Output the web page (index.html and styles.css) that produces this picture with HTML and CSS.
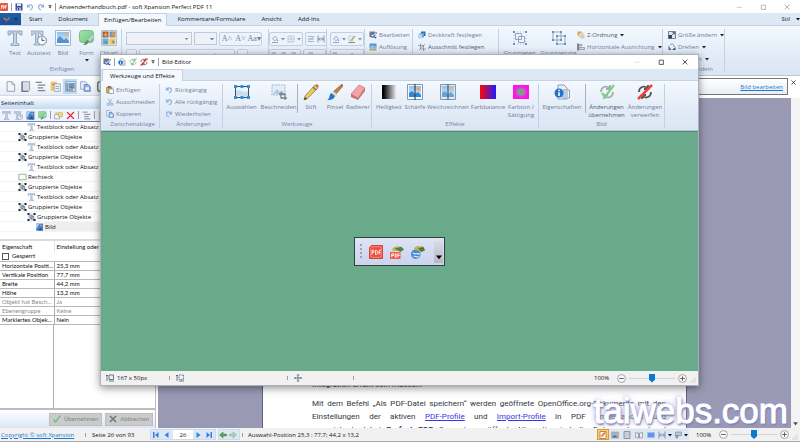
FILE: index.html
```html
<!DOCTYPE html>
<html lang="de">
<head>
<meta charset="utf-8">
<title>Anwenderhandbuch.pdf - soft Xpansion Perfect PDF 11</title>
<link rel="stylesheet" href="styles.css">
</head>
<body>
<svg class="defs" aria-hidden="true">
  <defs>
    <linearGradient id="g-sky" x1="0" y1="0" x2="0" y2="1"><stop offset="0" stop-color="#8fc0ee"/><stop offset="1" stop-color="#dcecfa"/></linearGradient>
    <linearGradient id="g-green" x1="0" y1="0" x2="1" y2="1"><stop offset="0" stop-color="#a4e2ae"/><stop offset="1" stop-color="#6cc483"/></linearGradient>
    <linearGradient id="g-dark" x1="0" y1="0" x2="1" y2="0"><stop offset=".1" stop-color="#000"/><stop offset="1" stop-color="#e8eaee"/></linearGradient>
    <linearGradient id="g-rb" x1="0" y1="0" x2="1" y2="0"><stop offset="0" stop-color="#ff0808"/><stop offset="1" stop-color="#1c1cff"/></linearGradient>
    <radialGradient id="g-hue"><stop offset="0" stop-color="#3fc94c"/><stop offset=".35" stop-color="#8a96a0"/><stop offset=".8" stop-color="#ff14e8"/></radialGradient>
  </defs>
  <symbol id="i-app" viewBox="0 0 16 16"><rect x="0" y="0" width="16" height="16" rx="2" fill="#e8553f"/><path d="M3 5v7M3 5h2v3H3M7 5v6h1l1-2V7L8 5zM11 11V5h3M11 8h2" fill="none" stroke="#fff" stroke-width="1.5"/></symbol>
  <symbol id="i-save" viewBox="0 0 16 16"><path d="M1 1h13l1 1v13H1z" fill="#4450a8"/><path d="M4 1h8v5H4z" fill="#dfe4f6"/><path d="M4 9h8v6H4z" fill="#aab4dc"/><path d="M6 10h2v4H6z" fill="#303c88"/></symbol>
  <symbol id="i-undo" viewBox="0 0 16 16"><path d="M3 3v5h5M4 7c3-5 9-4 9 1 0 3-2 5-5 6" fill="none" stroke="#8fadE0" stroke-width="2.4"/></symbol>
  <symbol id="i-redo" viewBox="0 0 16 16"><path d="M13 3v5H8M12 7C9 2 3 3 3 8c0 3 2 5 5 6" fill="none" stroke="#8fadE0" stroke-width="2.4"/></symbol>
  <symbol id="i-down" viewBox="0 0 8 8"><path d="M0 2h8L4 7z" fill="currentColor"/></symbol>
  <symbol id="i-more" viewBox="0 0 8 8"><path d="M1 0h6v1.500H1zM1 3h6L4 7z" fill="currentColor"/></symbol>
  <symbol id="i-bird" viewBox="0 0 16 16"><path d="M0 5l5 1 3 3 5-6-1 6-4 2-1 4-2-5-3-1z" fill="#c86f35"/><path d="M8 9l7-7-3 8z" fill="#4a8fc8"/></symbol>
  <symbol id="i-text" viewBox="0 0 16 16"><path d="M1 1h14v4h-2L12 3H9.500v10l2.500 1v1.500H4V14l2.500-1V3H4L3 5H1z" fill="#c4d2e5" stroke="#8198b8" stroke-width=".8"/></symbol>
  <symbol id="i-autotext" viewBox="0 0 16 16"><path d="M0 1h12v4h-2L9 3H7.500v10L9 14v1H3v-1l1.500-1V3H3L2 5H0z" fill="#c4d2e5" stroke="#8198b8" stroke-width=".7"/><circle cx="11" cy="10.500" r="4.500" fill="#f3f6fa" stroke="#7b8898"/><path d="M11 7.500v3h2.500" fill="none" stroke="#59687c"/></symbol>
  <symbol id="i-picture" viewBox="0 0 16 16"><path d="M.5.5h15v15H.5z" fill="#f1f7fc" stroke="#9db7d5"/><path d="M2 2h12v11H2z" fill="url(#g-sky)"/><path d="M2 13V9l3-3 4 4 2-2 3 3v2z" fill="#5293d0"/><circle cx="11.500" cy="5" r="1.500" fill="#ffb05f"/></symbol>
  <symbol id="i-form" viewBox="0 0 16 16"><rect x=".5" y=".5" width="14" height="12" rx="3" fill="url(#g-green)" stroke="#79bb87"/><path d="M16 6l-6 6-2-1 6-6z" fill="#c6cdd8"/><path d="M10 11c-1 4-4 4-6 4 2-1 2-4 5-5z" fill="#5d8c5f"/></symbol>
  <symbol id="i-clip" viewBox="0 0 16 16"><path d="M.5.5h15v15H.5z" fill="#eef1f5" stroke="#b4bfcf"/><path d="M1.500 1.500h6v6h-6z" fill="#8a5f4c"/><path d="M8.500 1.500h6v6h-6z" fill="#7c93ad"/><path d="M1.500 8.500h6v6h-6z" fill="#6cabdf"/><path d="M8.500 8.500h6v6h-6z" fill="#f1c758"/><path d="M2 5l3-3 2 3-2 2zM10 5l2-3 2 2v3z" fill="#e8963c"/><path d="M2 12l3-1 2 2-2 1z" fill="#69a65b"/><path d="M11 10l3 2-2 2z" fill="#5d8bc9"/></symbol>
  <symbol id="i-fill" viewBox="0 0 16 16"><path d="M3 8l5-6 5 5-5 5z" fill="#e3e9f2" stroke="#8796b2" stroke-width="1.300"/><path d="M12 8l3 4h-3z" fill="#6d92d0"/><path d="M2 14h12v2H2z" fill="#9aa2b3"/></symbol>
  <symbol id="i-grid" viewBox="0 0 16 16"><path d="M2 2h12v12H2zM8 2v12M2 8h12" fill="none" stroke="#aab6ca" stroke-width="1.300"/></symbol>
  <symbol id="i-space" viewBox="0 0 16 16"><path d="M2 3h12M2 13h12M3 11l4-3M13 5L8 8M1 8h13" fill="none" stroke="#8ca0c0" stroke-width="1.500"/></symbol>
  <symbol id="i-pen" viewBox="0 0 16 16"><path d="M2 2h8v10H2z" fill="#eef2f8" stroke="#a0acc0"/><path d="M14 1L6 9l-1 3 3-1 7-8z" fill="#c3a35d"/><path d="M1 14h13v2H1z" fill="#85868e"/></symbol>
  <symbol id="i-edit" viewBox="0 0 16 16"><rect x="1" y="1" width="11" height="11" fill="#bf6f44"/><circle cx="7" cy="8" r="5.500" fill="#3f7cc8"/><path d="M3 8l4 4 9-8-2-2-7 6-2-2z" fill="#e9eef8" stroke="#2b4e9b"/><path d="M9 13l6-2-1 4z" fill="#34539f"/></symbol>
  <symbol id="i-res" viewBox="0 0 16 16"><path d="M1 1h14v10H1z" fill="#5d97d3"/><path d="M2 9l4-4 3 3 3-2 2 3z" fill="#c4dcf1"/><path d="M1 12h14v3H1z" fill="#cba456"/></symbol>
  <symbol id="i-opac" viewBox="0 0 16 16"><path d="M6 1h9v9H6z" fill="#2f70ad"/><path d="M3 4h9v9H3z" fill="#6aa8d8"/><path d="M0 7h8v8H0z" fill="#bcd8ed"/></symbol>
  <symbol id="i-crop" viewBox="0 0 16 16"><path d="M5 1v11h11M0 5h11v11M2 14L14 2" fill="none" stroke="#707988" stroke-width="1.300"/></symbol>
  <symbol id="i-group" viewBox="0 0 16 16"><path d="M2 2h8v8H2zM6 6h8v8H6z" fill="none" stroke="#91a8c8"/><path d="M1 1h2v2H1zM9 1h2v2H9zM1 9h2v2H1zM5 5h2v2H5zM13 5h2v2h-2zM5 13h2v2H5zM13 13h2v2h-2zM9 9h2v2H9z" fill="#718eb4"/></symbol>
  <symbol id="i-groupout" viewBox="0 0 16 16"><path d="M3.500 3.500h6v6h-6zM6.500 6.500h6v6h-6z" fill="none" stroke="#8fa4c2"/><path d="M1 1h2v2H1zM13 1h2v2h-2zM1 13h2v2H1zM13 13h2v2h-2z" fill="#718eb4"/><path d="M5 2h1M8 2h1M11 2h1M5 14h1M8 14h1M11 14h1M2 5v1M2 8v1M2 11v1M14 5v1M14 8v1M14 11v1" stroke="#a8bad2"/></symbol>
  <symbol id="i-groupd" viewBox="0 0 16 16"><path d="M1.500 1.500h13v13h-13z" fill="none" stroke="#8a96aa" stroke-dasharray="2 1"/><path d="M4.500 4.500h5v6h-5zM7 6.500h5v6H7z" fill="#eef2f8" stroke="#44546f" stroke-width="1.200"/><path d="M0 0h4v4H0zM12 0h4v4h-4zM0 12h4v4H0zM12 12h4v4h-4z" fill="#1b263a"/></symbol>
  <symbol id="i-order" viewBox="0 0 16 16"><path d="M1 1h8v8H1z" fill="#d6a64d"/><path d="M4 4h8v8H4z" fill="#f5e0ae" stroke="#c8a666"/><path d="M8 8h7v7H8z" fill="#c8ced8"/></symbol>
  <symbol id="i-align" viewBox="0 0 16 16"><path d="M2 1v14" stroke="#222" stroke-width="2"/><path d="M4 3h6v3H4zM4 9h11v4H4z" fill="#cfdcec" stroke="#5d6e88"/></symbol>
  <symbol id="i-size" viewBox="0 0 16 16"><path d="M1 1h14v14H1z" fill="#dde7f2" stroke="#52647c" stroke-width="1.500"/><path d="M1 8h7v7H1z" fill="#33485f"/><path d="M8 8l5-5M9 3h4v4" fill="none" stroke="#33485f" stroke-width="1.500"/></symbol>
  <symbol id="i-rotate" viewBox="0 0 16 16"><path d="M1 14V5l6 9z" fill="#6e56a0"/><path d="M8 14h7V8z" fill="#38518a"/><path d="M4 4c4-4 9-1 8 4" fill="none" stroke="#5575a8" stroke-width="1.500"/></symbol>
  <symbol id="i-page" viewBox="0 0 16 16"><path d="M3 1h7l4 4v10H3z" fill="#f4f6f9" stroke="#8492a6" stroke-width="1.200"/><path d="M10 1v4h4" fill="none" stroke="#8492a6"/></symbol>
  <symbol id="i-book" viewBox="0 0 16 16"><path d="M3 1h11v12l-2 2H3z" fill="#d7dee8" stroke="#8492a6" stroke-width="1.200"/><path d="M3 1v14h9" stroke="#66758a" stroke-width="1.800" fill="none"/></symbol>
  <symbol id="i-open" viewBox="0 0 16 16"><path d="M1 3l6 1v10l-6-1zM15 3L9 4v10l6-1z" fill="#e8ecf1" stroke="#7d8793" stroke-width="1.300"/><path d="M8 4v10" stroke="#7d8793"/></symbol>
  <symbol id="i-list" viewBox="0 0 16 16"><path d="M1 2h9M4 6h11M4 10h8M4 14h11" stroke="#7a8798" stroke-width="1.700"/></symbol>
  <symbol id="i-tpl" viewBox="0 0 16 16"><path d="M1 1h9v13H1z" fill="#f5c468"/><path d="M6 4h9v11H6z" fill="#edf1f6" stroke="#8492a6"/><path d="M8 8h5M8 11h5M3 5h4" stroke="#6c85a8"/></symbol>
  <symbol id="i-layer" viewBox="0 0 16 16"><path d="M1 1h14v14H1z" fill="#eef5fc" stroke="#70859e"/><path d="M5 3h9v8H5z" fill="#5f9bd0"/><path d="M6 11l3-4 5 4z" fill="#b16a45"/><path d="M3 3v10h9" fill="none" stroke="#445a78" stroke-width="1.500"/></symbol>
  <symbol id="i-copy" viewBox="0 0 16 16"><path d="M1 1h7l2 2v9H1z" fill="#eaf1f9" stroke="#6d8dba"/><path d="M6 5h6l3 3v7H6z" fill="#8eb2df" stroke="#4877b6"/><path d="M8 9h5v4H8z" fill="#e9f2fb"/></symbol>
  <symbol id="i-attach" viewBox="0 0 16 16"><path d="M11 4v8c0 4-7 4-7 0V4c0-4 5-3 5 0v8" fill="none" stroke="#59606c" stroke-width="1.800"/></symbol>
  <symbol id="i-del" viewBox="0 0 16 16"><path d="M2 2l12 12M14 2L2 14" stroke="#e3232a" stroke-width="2.500"/></symbol>
  <symbol id="i-rect" viewBox="0 0 16 16"><path d="M.8 2.500h14.400v11H.8z" fill="#fff" stroke="#66a56e" stroke-width="1.500"/></symbol>
  <symbol id="i-bild" viewBox="0 0 16 16"><path d="M1 1h14v14H1z" fill="#4085d0"/><path d="M1 1h7L3 10 1 12z" fill="#a9cff3"/><path d="M4 15l6-6 5 6z" fill="#23539a"/><circle cx="11" cy="5" r="2" fill="#f09a55"/></symbol>
  <symbol id="i-new" viewBox="0 0 16 16"><path d="M1 6h9v8H1z" fill="#edf3fb" stroke="#5c7fb0"/><path d="M8 3h7v7H8z" fill="#f7dc87" stroke="#bf9742"/><path d="M4 1v5M2 3h5" stroke="#e5a339"/></symbol>
  <symbol id="i-check" viewBox="0 0 16 16"><path d="M1 9l4 5L15 1" fill="none" stroke="#75b77c" stroke-width="2.500"/></symbol>
  <symbol id="i-x" viewBox="0 0 16 16"><path d="M2 2l12 12M14 2L2 14" stroke="#777b80" stroke-width="3.500"/></symbol>
  <symbol id="i-min" viewBox="0 0 10 10"><path d="M1 5.500h9" stroke="currentColor"/></symbol>
  <symbol id="i-max" viewBox="0 0 10 10"><path d="M2 2h7v7H2z" fill="none" stroke="currentColor" stroke-width="1.300"/></symbol>
  <symbol id="i-close" viewBox="0 0 10 10"><path d="M1 1l8 8M9 1L1 9" stroke="currentColor" stroke-width="1.400"/></symbol>
  <symbol id="i-info" viewBox="0 0 16 16"><path d="M4 1h6l3 3v11H4z" fill="#e9f0f8" stroke="#8c9eb6"/><path d="M9 6h6.500v8H9z" fill="#f4f7fb" stroke="#8ca0bc"/><path d="M10 8h4M10 10h4M10 12h4" stroke="#8ca0bc"/><circle cx="5" cy="9" r="4.500" fill="#1e73cc"/><path d="M5 5.800v1.500M5 8.200V12" stroke="#fff" stroke-width="1.600"/></symbol>
  <symbol id="i-accept" viewBox="0 0 16 16"><path d="M2 8c0-5 5-7 9-4M11 1v4H7M14 8c0 5-5 7-9 4M5 15v-4h4" fill="none" stroke="#9fb0ac" stroke-width="1.800"/><path d="M3 9l3 4 9-12" fill="none" stroke="#86cf8e" stroke-width="2.300"/></symbol>
  <symbol id="i-reject" viewBox="0 0 16 16"><path d="M2 8c0-5 5-7 9-4M11 1v4H7M14 8c0 5-5 7-9 4M5 15v-4h4" fill="none" stroke="#555" stroke-width="1.800"/><path d="M1 15L15 1" stroke="#ee4438" stroke-width="2.500"/></symbol>
  <symbol id="i-paste" viewBox="0 0 16 16"><path d="M1 2h11v12H1z" fill="#e4a63c" stroke="#8a6d34"/><path d="M4 0h5v4H4z" fill="#626e80"/><path d="M6 6h9v9H6z" fill="#f4f7fb" stroke="#506d98"/></symbol>
  <symbol id="i-cut" viewBox="0 0 16 16"><path d="M4 1l5 9M12 1l-5 9" stroke="#8da2bd" stroke-width="1.500"/><circle cx="4.500" cy="12.500" r="2.300" fill="none" stroke="#7395c4" stroke-width="1.500"/><circle cx="11.500" cy="12.500" r="2.300" fill="none" stroke="#7395c4" stroke-width="1.500"/></symbol>
  <symbol id="i-select" viewBox="0 0 16 16"><path d="M1.500 2.500h13v11h-13z" fill="#edf4fb" stroke="#454e5c"/><path d="M2 7c4-3 8 3 12 0v5c-4 2-8-2-12 0z" fill="#c6def2"/><path d="M0 1h3v3H0zM6.500 1h3v3h-3zM13 1h3v3h-3zM0 12h3v3H0zM6.500 12h3v3h-3zM13 12h3v3h-3z" fill="#2e91dc"/></symbol>
  <symbol id="i-trim" viewBox="0 0 16 16"><path d="M1 1h13v10H1z" fill="#e4edf5" stroke="#a2b4c7" stroke-dasharray="2 1"/><path d="M2 10l4-5 3 3 2-2 2 4z" fill="#abcbe5"/><path d="M10 8v6h6M8 10h6v6" fill="none" stroke="#777f88" stroke-width="1.300"/></symbol>
  <symbol id="i-pencil" viewBox="0 0 16 16"><path d="M12 1l3 3L5 14l-4 2 1-4z" fill="#edcb5b" stroke="#86723d" stroke-width=".7"/><path d="M12 1l3 3 1-2-2-2z" fill="#e06b5e"/><path d="M10 3l3 3" stroke="#68905c" stroke-width="1.500"/><path d="M1 16l1-3 2 2z" fill="#36352e"/></symbol>
  <symbol id="i-brush" viewBox="0 0 16 16"><path d="M15 0l1 2-7 8-3-2z" fill="#bd7e3e" stroke="#81552e" stroke-width=".6"/><path d="M6 7l4 3-1 3-5-3z" fill="#d5d9df"/><path d="M4 9l4 3c-1 4-5 4-8 4 3-1 2-5 4-7z" fill="#2878c9"/></symbol>
  <symbol id="i-eraser" viewBox="0 0 16 16"><path d="M9 1l6 3-7 10-7-4z" fill="#f3a5a5" stroke="#c47073" stroke-width=".7"/><path d="M1 10l7 4v2l-7-3zM15 4v3L8 16v-2z" fill="#c76f71"/></symbol>
  <symbol id="i-bright" viewBox="0 0 16 16"><path d="M1 1h14v14H1z" fill="url(#g-dark)"/></symbol>
  <symbol id="i-sharp" viewBox="0 0 16 16"><path d="M.5.5h15v15H.5z" fill="#fafcfe" stroke="#8297b0"/><path d="M2 2h12v11H2z" fill="url(#g-sky)"/><path d="M2 13V9l3-2 3 3 3-2 3 3v2z" fill="#2e87d4"/><circle cx="11.500" cy="5" r="1.800" fill="#f2a74f"/><path d="M8 0v16" stroke="#384352" stroke-width="1.200"/></symbol>
  <symbol id="i-soft" viewBox="0 0 16 16"><path d="M.5.5h15v15H.5z" fill="#dfe8f2" stroke="#8297b0"/><path d="M2 2h12v11H2z" fill="url(#g-sky)"/><path d="M2 13V9l3-2 3 3 3-2 3 3v2z" fill="#69a4d8"/><circle cx="11.500" cy="5" r="1.800" fill="#e0b98b"/><path d="M8 0v16" stroke="#4d5a6c" stroke-width="1.200"/></symbol>
  <symbol id="i-rb" viewBox="0 0 16 16"><path d="M0 1h16v14H0z" fill="url(#g-rb)"/></symbol>
  <symbol id="i-hue" viewBox="0 0 16 16"><path d="M0 1h16v14H0z" fill="url(#g-hue)"/></symbol>
  <symbol id="i-dim" viewBox="0 0 16 16"><path d="M6 2h9v9H6zM2 2v12M0 4l2-2 2 2M6 14h10" fill="none" stroke="#40506a" stroke-width="1.500"/></symbol>
  <symbol id="i-dimsel" viewBox="0 0 16 16"><path d="M6 2h9v9H6z" fill="none" stroke="#40506a" stroke-width="1.500" stroke-dasharray="2 1"/><path d="M2 2v12M0 4l2-2 2 2M6 14h10" fill="none" stroke="#40506a" stroke-width="1.500"/></symbol>
  <symbol id="i-move" viewBox="0 0 16 16"><path d="M8 1v14M1 8h14M6 3l2-2 2 2M6 13l2 2 2-2M3 6L1 8l2 2M13 6l2 2-2 2" fill="none" stroke="#3b4a61" stroke-width="1.400"/></symbol>
  <symbol id="i-minus" viewBox="0 0 16 16"><circle cx="8" cy="8" r="7" fill="#f8f8f8" stroke="#8a8a8a" stroke-width="1.300"/><path d="M4 8h8" stroke="#555" stroke-width="1.600"/></symbol>
  <symbol id="i-plus" viewBox="0 0 16 16"><circle cx="8" cy="8" r="7" fill="#f8f8f8" stroke="#8a8a8a" stroke-width="1.300"/><path d="M4 8h8M8 4v8" stroke="#555" stroke-width="1.600"/></symbol>
  <symbol id="i-grip" viewBox="0 0 12 12"><path d="M9 1h2v2H9zM9 5h2v2H9zM9 9h2v2H9zM5 5h2v2H5zM5 9h2v2H5zM1 9h2v2H1z" fill="#b8b8b8"/></symbol>
  <symbol id="i-first" viewBox="0 0 16 16"><path d="M2 2h3v12H2zM13 2v12L6 8z" fill="#3c7ce0"/></symbol>
  <symbol id="i-prev" viewBox="0 0 16 16"><path d="M11 2v12L3 8z" fill="#3c7ce0"/></symbol>
  <symbol id="i-next" viewBox="0 0 16 16"><path d="M5 2v12l8-6z" fill="#3c7ce0"/></symbol>
  <symbol id="i-last" viewBox="0 0 16 16"><path d="M11 2h3v12h-3zM3 2v12l7-6z" fill="#3c7ce0"/></symbol>
  <symbol id="i-back" viewBox="0 0 16 16"><path d="M8 2v4h7v4H8v4L1 8z" fill="#5fa159" stroke="#3e7d3b"/></symbol>
  <symbol id="i-fwd" viewBox="0 0 16 16"><path d="M8 2v4H1v4h7v4l7-6z" fill="#b0ceae" stroke="#8bad88"/></symbol>
  <symbol id="i-mode" viewBox="0 0 16 16"><path d="M2 1h12v14H2z" fill="#fff8ea" stroke="#a96d3e" stroke-width="1.500"/><path d="M5 11l7-8" stroke="#d2622b" stroke-width="2.500"/></symbol>
  <symbol id="i-view" viewBox="0 0 16 16"><path d="M1 2h14v12H1z" fill="#8fb5e4" stroke="#d59d4e" stroke-width="1.400"/><path d="M2 13l5-5 7 5z" fill="#4273b5"/><circle cx="11" cy="5" r="1.800" fill="#f6a54c"/></symbol>
  <symbol id="i-sheet" viewBox="0 0 16 16"><path d="M2 1h12v14H2z" fill="#c9ccd1" stroke="#7d8189" stroke-width="1.500"/></symbol>
  <symbol id="i-full" viewBox="0 0 16 16"><rect x="1" y="3" width="14" height="10" rx="1" fill="#6493ec" stroke="#a2baf0" stroke-width="2"/></symbol>
  <symbol id="i-fit" viewBox="0 0 16 16"><path d="M2 1v14M14 1v14M3 8h10M6 5L3 8l3 3M10 5l3 3-3 3" fill="none" stroke="#6681a6" stroke-width="1.600"/></symbol>
  <symbol id="i-scan" viewBox="0 0 16 16"><path d="M3 2h12v7H3z" fill="#bcc7d6" stroke="#627087"/><path d="M1 8h9l-3 7H5z" fill="#7d92ad"/></symbol>
  <symbol id="i-pdf" viewBox="0 0 16 16"><path d="M3 .5h12.500v15H.5V3z" fill="#ef4a3b" stroke="#c8362c"/><path d="M3 2h11v12H2V4z" fill="none" stroke="#f9938a"/><path d="M3.500 11V6h2v2.500h-2M7.500 6v5h1l1-1V7l-1-1zM11.500 11V6h2M11.500 8.500H13" fill="none" stroke="#fff"/></symbol>
  <symbol id="i-pdfsend" viewBox="0 0 16 16"><path d="M2 6c2-5 6-5 11-4v4L5 7z" fill="#c6b65a"/><path d="M5 4l8-2 3 3-4 3z" fill="#5d7f48"/><path d="M0 8h12v8H0z" fill="#f15a4d"/><path d="M2 14v-4h2v2H2M6 10v4h1v-4zM9 14v-4h2M9 12h2" fill="none" stroke="#fff"/></symbol>
  <symbol id="i-websend" viewBox="0 0 16 16"><circle cx="5.500" cy="10.500" r="5.500" fill="#4789d0"/><path d="M2 9c3 3 6-1 8 2M3 13c3-1 4 2 6 0" fill="none" stroke="#e2f0ff" stroke-width="1.300"/><path d="M3 5c2-5 6-4 11-3l2 4-5 2-4-2z" fill="#c1b14f"/><path d="M8 4l6-2 2 4-4 2z" fill="#55763f"/></symbol>
</svg>

<div class="app">
  <header class="titlebar">
    <svg class="ic"><use href="#i-app"/></svg><i class="bar"></i>
    <svg class="ic"><use href="#i-save"/></svg><svg class="ic"><use href="#i-undo"/></svg><svg class="ic"><use href="#i-redo"/></svg>
    <svg class="arrow"><use href="#i-more"/></svg><i class="bar"></i>
    <h1>Anwenderhandbuch.pdf - soft Xpansion Perfect PDF 11</h1>
    <div class="winbtns muted">
      <button aria-label="Minimieren"><svg><use href="#i-min"/></svg></button><button aria-label="Maximieren"><svg><use href="#i-max"/></svg></button><button aria-label="Schließen"><svg><use href="#i-close"/></svg></button>
    </div>
  </header>
  <nav class="tabs">
    <button class="appmenu" aria-label="Menü"><svg class="ic"><use href="#i-bird"/></svg><svg class="arrow"><use href="#i-down"/></svg></button>
    <button>Start</button><button>Dokument</button><button class="active">Einfügen/Bearbeiten</button><button>Kommentare/Formulare</button><button>Ansicht</button><button>Add-Ins</button>
    <button class="style">Stil <svg class="arrow"><use href="#i-down"/></svg></button>
  </nav>
  <section class="ribbon main-ribbon">
    <div class="group g-insert">
      <div class="tools">
        <button class="big"><svg><use href="#i-text"/></svg>Text</button>
        <button class="big"><svg><use href="#i-autotext"/></svg>Autotext</button>
        <button class="big"><svg><use href="#i-picture"/></svg>Bild</button>
        <button class="big"><svg><use href="#i-form"/></svg>Form<svg class="arrow"><use href="#i-down"/></svg></button>
        <button class="big"><svg><use href="#i-clip"/></svg>Clipart</button>
      </div>
      <h2>Einfügen</h2>
    </div>
    <div class="group g-font">
      <div class="row"><select class="wide" aria-label="Schriftart"></select><select class="small" aria-label="Schriftgröße"></select>
        <div class="set serif"><button>A˄</button><button>A˅</button><button>Aa▾</button></div></div>
      <div class="row"><div class="set"><button>ab</button></div><div class="set fmt"><button><b>B</b></button><button><em>I</em></button><button><u>U</u></button><button><s>abc</s></button><button>x₂</button><button>x²</button><button>ab▾</button></div><div class="set"><button>A▾</button></div></div>
    </div>
    <div class="group g-para">
      <div class="row"><div class="set"><button aria-label="Füllung"><svg class="ic"><use href="#i-fill"/></svg><svg class="arrow"><use href="#i-down"/></svg></button><button aria-label="Rahmen"><svg class="ic"><use href="#i-grid"/></svg><svg class="arrow"><use href="#i-down"/></svg></button></div><div class="set"><button aria-label="Abstand"><svg class="ic"><use href="#i-space"/></svg></button><button aria-label="Breite"><svg class="ic"><use href="#i-fit"/></svg></button></div></div>
      <div class="row"><div class="set"><button aria-label="Links"><svg class="ic"><use href="#i-list"/></svg></button><button aria-label="Mitte"><svg class="ic"><use href="#i-list"/></svg></button><button aria-label="Rechts"><svg class="ic"><use href="#i-list"/></svg></button></div><div class="set"><button aria-label="Zeilen"><svg class="ic"><use href="#i-list"/></svg><svg class="arrow"><use href="#i-down"/></svg></button></div></div>
    </div>
    <div class="group g-line">
      <div class="row"><div class="set"><button aria-label="Füllfarbe"><svg class="ic"><use href="#i-fill"/></svg><svg class="arrow"><use href="#i-down"/></svg></button><button aria-label="Linienfarbe"><svg class="ic"><use href="#i-pen"/></svg><svg class="arrow"><use href="#i-down"/></svg></button></div></div>
      <div class="row"><div class="set"><button aria-label="Stärke"><svg class="ic"><use href="#i-list"/></svg><svg class="arrow"><use href="#i-down"/></svg></button><button aria-label="Enden"><svg class="ic"><use href="#i-fill"/></svg><svg class="arrow"><use href="#i-down"/></svg></button></div></div>
    </div>
    <div class="group g-edit stack">
      <button class="item"><svg class="ic"><use href="#i-edit"/></svg>Bearbeiten</button>
      <button class="item"><svg class="ic"><use href="#i-res"/></svg>Auflösung</button>
    </div>
    <div class="group g-opac stack">
      <button class="item"><svg class="ic"><use href="#i-opac"/></svg>Deckkraft festlegen</button>
      <button class="item strong"><svg class="ic"><use href="#i-crop"/></svg>Ausschnitt festlegen</button>
    </div>
    <div class="group g-arrange">
      <button class="big"><svg><use href="#i-groupout"/></svg>Gruppieren</button>
      <button class="big"><svg><use href="#i-group"/></svg>Gruppierung</button>
      <div class="stack">
        <button class="item strong"><svg class="ic"><use href="#i-order"/></svg>Z-Ordnung <svg class="arrow"><use href="#i-down"/></svg></button>
        <button class="item"><svg class="ic"><use href="#i-align"/></svg>Horizontale Ausrichtung <svg class="arrow"><use href="#i-down"/></svg></button>
      </div>
    </div>
    <div class="group g-transform">
      <div class="stack">
        <button class="item"><svg class="ic"><use href="#i-size"/></svg>Größe ändern <svg class="arrow"><use href="#i-down"/></svg></button>
        <button class="item"><svg class="ic"><use href="#i-rotate"/></svg>Drehen <svg class="arrow"><use href="#i-down"/></svg></button>
        <button class="item"><svg class="ic"><use href="#i-size"/></svg>Spiegeln <svg class="arrow"><use href="#i-down"/></svg></button>
      </div>
      <h2>Umwandeln</h2>
    </div>
  </section>

  <main class="work">
    <aside class="side">
      <div class="panes">
        <button aria-label="Seiten"><svg><use href="#i-page"/></svg></button><button aria-label="Lesezeichen"><svg><use href="#i-book"/></svg></button><button aria-label="Gliederung"><svg><use href="#i-list"/></svg></button><button aria-label="Vorlagen"><svg><use href="#i-tpl"/></svg></button><button class="on" aria-label="Seiteninhalt"><svg><use href="#i-layer"/></svg></button><button aria-label="Kopien"><svg><use href="#i-copy"/></svg></button><button aria-label="Anlagen"><svg><use href="#i-attach"/></svg></button>
      </div>
      <h2 class="side-title">Seiteninhalt</h2>
      <div class="mini">
        <svg class="ic"><use href="#i-text"/></svg><svg class="ic"><use href="#i-autotext"/></svg><svg class="ic"><use href="#i-bild"/></svg><svg class="ic"><use href="#i-form"/></svg><i class="bar"></i><svg class="ic"><use href="#i-new"/></svg><svg class="ic"><use href="#i-del"/></svg><i class="bar"></i><svg class="ic"><use href="#i-list"/></svg><i class="bar"></i><svg class="ic"><use href="#i-page"/></svg>
      </div>
      <ul class="tree">
        <li class="l2"><svg class="ic"><use href="#i-text"/></svg>Textblock oder Absatz</li>
        <li class="l1"><svg class="ic"><use href="#i-groupd"/></svg>Gruppierte Objekte</li>
        <li class="l2"><svg class="ic"><use href="#i-text"/></svg>Textblock oder Absatz</li>
        <li class="l1"><svg class="ic"><use href="#i-groupd"/></svg>Gruppierte Objekte</li>
        <li class="l2"><svg class="ic"><use href="#i-text"/></svg>Textblock oder Absatz</li>
        <li class="l1"><svg class="ic"><use href="#i-rect"/></svg>Rechteck</li>
        <li class="l1"><svg class="ic"><use href="#i-groupd"/></svg>Gruppierte Objekte</li>
        <li class="l2"><svg class="ic"><use href="#i-text"/></svg>Textblock oder Absatz</li>
        <li class="l1"><svg class="ic"><use href="#i-groupd"/></svg>Gruppierte Objekte</li>
        <li class="l2"><svg class="ic"><use href="#i-groupd"/></svg>Gruppierte Objekte</li>
        <li class="l3"><svg class="ic"><use href="#i-bild"/></svg>Bild</li>
      </ul>
      <div class="props">
        <table>
          <thead><tr><th>Eigenschaft</th><th>Einstellung oder Wert</th></tr></thead>
          <tbody>
            <tr class="lock"><td colspan="2"><label><input type="checkbox">Gesperrt</label></td></tr>
            <tr><td>Horizontale Positi…</td><td>25,3 mm</td></tr>
            <tr><td>Vertikale Position</td><td>77,7 mm</td></tr>
            <tr><td>Breite</td><td>44,2 mm</td></tr>
            <tr><td>Höhe</td><td>13,2 mm</td></tr>
            <tr class="off"><td>Objekt hat Besch…</td><td>Ja</td></tr>
            <tr class="off"><td>Ebenengruppe</td><td>Keine</td></tr>
            <tr><td>Markiertes Objek…</td><td>Nein</td></tr>
          </tbody>
        </table>
        <div class="rest"></div>
      </div>
      <div class="confirm"><button disabled><svg class="ic"><use href="#i-check"/></svg>Übernehmen</button><button disabled><svg class="ic"><use href="#i-x"/></svg>Abbrechen</button></div>
    </aside>
    <section class="doc">
      <div class="notice"><div class="notice-box"><a href="#bild">Bild bearbeiten</a></div><button aria-label="Schließen"><svg><use href="#i-close"/></svg></button></div>
      <div class="canvas">
        <article class="page">
          <p>Integration erfüllt sein müssen.</p>
          <p class="last"><span class="line">Mit dem Befehl „Als PDF-Datei speichern“ werden geöffnete OpenOffice.org-Dokumente mit den</span><span class="line">Einstellungen der aktiven <a href="#pdf">PDF-Profile</a> und <a href="#imp">Import-Profile</a> in PDF umgewandelt und</span><span class="line">gespeichert, dabei <b>Perfect PDF</b> <a href="#conv">Converter</a> geöffnet. Alternativ sind die Dokumente anhand</span></p>
        </article>
        <div class="scroll"><svg><use href="#i-down"/></svg></div>
      </div>
      <div class="watermark">taiwebs.com</div>
    </section>
  </main>

  <footer class="status">
    <a href="#copyright">Copyright © soft Xpansion</a><i class="tick"></i><span class="pageno">Seite 26 von 93</span>
    <div class="pager"><button aria-label="Erste"><svg class="ic"><use href="#i-first"/></svg></button><button aria-label="Vorige"><svg class="ic"><use href="#i-prev"/></svg></button><input type="text" value="26" aria-label="Seite"><button aria-label="Nächste"><svg class="ic"><use href="#i-next"/></svg></button><button aria-label="Letzte"><svg class="ic"><use href="#i-last"/></svg></button></div>
    <div class="history"><button aria-label="Zurück"><svg class="ic"><use href="#i-back"/></svg></button><button aria-label="Vor"><svg class="ic"><use href="#i-fwd"/></svg></button></div>
    <i class="tick"></i><span>Auswahl-Position 25,3 : 77,7; 44,2 x 13,2</span>
    <div class="views"><button class="on" aria-label="Bearbeiten"><svg class="ic"><use href="#i-mode"/></svg></button><button aria-label="Bild"><svg class="ic"><use href="#i-view"/></svg></button><button aria-label="Seite"><svg class="ic"><use href="#i-sheet"/></svg></button><button aria-label="Buch"><svg class="ic"><use href="#i-open"/></svg></button><button aria-label="Vollbild"><svg class="ic"><use href="#i-full"/></svg></button><button aria-label="Anpassen"><svg class="ic"><use href="#i-fit"/></svg><svg class="arrow"><use href="#i-down"/></svg></button><button aria-label="Scannen"><svg class="ic"><use href="#i-scan"/></svg><svg class="arrow"><use href="#i-down"/></svg></button></div>
    <div class="zoom"><span>100%</span><button aria-label="Verkleinern"><svg><use href="#i-minus"/></svg></button><input type="range" aria-label="Zoom" value="50"><button aria-label="Vergrößern"><svg><use href="#i-plus"/></svg></button><svg class="grip"><use href="#i-grip"/></svg></div>
  </footer>
</div>

<section class="dialog" role="dialog" aria-label="Bild-Editor">
  <header class="titlebar">
    <svg class="ic"><use href="#i-edit"/></svg><i class="bar"></i>
    <svg class="ic"><use href="#i-info"/></svg><svg class="ic"><use href="#i-accept"/></svg><svg class="ic"><use href="#i-reject"/></svg><svg class="arrow"><use href="#i-more"/></svg><i class="bar"></i>
    <h1>Bild-Editor</h1>
    <div class="winbtns"><button class="faint" aria-label="Minimieren"><svg><use href="#i-min"/></svg></button><button aria-label="Maximieren"><svg><use href="#i-max"/></svg></button><button aria-label="Schließen"><svg><use href="#i-close"/></svg></button></div>
  </header>
  <nav class="tabs"><button class="active">Werkzeuge und Effekte</button></nav>
  <div class="ribbon">
    <div class="group d-clip">
      <div class="stack"><button class="item"><svg class="ic"><use href="#i-paste"/></svg>Einfügen</button><button class="item"><svg class="ic"><use href="#i-cut"/></svg>Ausschneiden</button><button class="item"><svg class="ic"><use href="#i-copy"/></svg>Kopieren</button></div>
      <h2>Zwischenablage</h2>
    </div>
    <div class="group d-undo">
      <div class="stack"><button class="item"><svg class="ic"><use href="#i-undo"/></svg>Rückgängig</button><button class="item"><svg class="ic"><use href="#i-undo"/></svg>Alle rückgängig</button><button class="item"><svg class="ic"><use href="#i-redo"/></svg>Wiederholen</button></div>
      <h2>Änderungen</h2>
    </div>
    <div class="group d-tools">
      <div class="tools"><button class="big"><svg><use href="#i-select"/></svg>Auswählen</button><button class="big"><svg><use href="#i-trim"/></svg>Beschneiden</button><i class="vline"></i><button class="big"><svg><use href="#i-pencil"/></svg>Stift</button><button class="big"><svg><use href="#i-brush"/></svg>Pinsel</button><button class="big"><svg><use href="#i-eraser"/></svg>Radierer</button></div>
      <h2>Werkzeuge</h2>
    </div>
    <div class="group d-fx">
      <div class="tools"><button class="big"><svg><use href="#i-bright"/></svg>Helligkeit</button><button class="big"><svg><use href="#i-sharp"/></svg>Schärfe</button><button class="big"><svg><use href="#i-soft"/></svg>Weichzeichnen</button><button class="big"><svg><use href="#i-rb"/></svg>Farbbalance</button><button class="big"><svg><use href="#i-hue"/></svg>Farbton /<br>Sättigung</button></div>
      <h2>Effekte</h2>
    </div>
    <div class="group d-image">
      <div class="tools"><button class="big"><svg><use href="#i-info"/></svg>Eigenschaften</button><i class="vline"></i><button class="big strong"><svg><use href="#i-accept"/></svg>Änderungen<br>übernehmen</button><button class="big"><svg><use href="#i-reject"/></svg>Änderungen<br>verwerfen</button></div>
      <h2>Bild</h2>
    </div>
  </div>
  <div class="stage">
    <div class="toolbar-image"><i class="dots"></i><svg><use href="#i-pdf"/></svg><svg><use href="#i-pdfsend"/></svg><svg><use href="#i-websend"/></svg><i class="drop"><svg class="arrow"><use href="#i-down"/></svg></i></div>
  </div>
  <footer class="dstatus">
    <div class="cell c1"><svg class="ic"><use href="#i-dim"/></svg>167 x 50px</div>
    <div class="cell c2"><svg class="ic"><use href="#i-dimsel"/></svg></div>
    <div class="cell c3"><svg class="ic"><use href="#i-move"/></svg></div>
    <div class="cell c4"></div>
    <div class="zoom"><span>100%</span><button aria-label="Verkleinern"><svg><use href="#i-minus"/></svg></button><input type="range" aria-label="Zoom" value="50"><button aria-label="Vergrößern"><svg><use href="#i-plus"/></svg></button><svg class="grip"><use href="#i-grip"/></svg></div>
  </footer>
</section>
</body>
</html>
```

FILE: styles.css
```css
* { box-sizing: border-box; }
html, body { height: 100%; margin: 0; }
body { position: relative; overflow: hidden; background: #fff; color: #30343c; font: 6px/8px "Open Sans", "Noto Sans", sans-serif; }
button, input, select { font: inherit; color: inherit; margin: 0; padding: 0; border: 0; background: none; min-width: 0; }
h1, h2, p, ul { margin: 0; padding: 0; font-size: inherit; font-weight: normal; }
svg { display: block; flex: none; overflow: visible; }
a { color: #1a78d2; }
.defs { position: absolute; width: 0; height: 0; }
.ic { width: 8px; height: 8px; }
.arrow { width: 4px; height: 4px; }
.bar { width: 1px; height: 8px; background: #999fa8; }

.app { display: flex; flex-direction: column; height: 100%; }
.titlebar { display: flex; align-items: center; gap: 3px; flex: none; background: #fff; }
.titlebar h1 { color: #111; font-size: 6px; white-space: nowrap; }
.app > .titlebar { height: 13px; }
.winbtns { display: flex; gap: 18px; margin-left: auto; padding-right: 10px; color: #333; }
.winbtns svg { width: 6px; height: 6px; }
.muted { color: #a5a5a5; }
.faint { color: #ccc; }

.tabs { display: flex; flex: none; height: 13px; background: #dee8f5; border-bottom: 1px solid #c3d2e6; color: #10141a; }
.tabs button { padding: 0 8px; white-space: nowrap; }
.tabs .active { margin-bottom: -1px; background: #f5f9fe; border: 1px solid #c0d0e5; border-bottom: 0; }
.app .tabs .active { padding: 0 5px; margin: 0 2px -1px; }
.app .tabs .appmenu { display: flex; align-items: center; gap: 3px; width: 21px; padding: 0 3px; background: linear-gradient(#1d5fa8, #1c4f94); color: #102c55; }
.app .tabs .style { display: flex; align-items: center; gap: 6px; margin-left: auto; padding: 0 0 0 6px; }

.ribbon { display: flex; flex: none; height: 50px; padding-top: 3px; background: linear-gradient(#f4f9fe, #e2ebf7 60%, #dae5f4); border-bottom: 1px solid #b6c5da; color: #6f7f97; }
.group { display: flex; flex-direction: column; flex: none; height: 44px; border-right: 1px solid #c5d1e2; }
.group h2 { margin-top: auto; text-align: center; color: #7686a0; }
.tools { display: grid; }
.big { display: flex; flex-direction: column; align-items: center; line-height: 8px; white-space: nowrap; }
.big > svg { width: 16px; height: 16px; margin-bottom: 3px; }
.big > .arrow { width: 4px; height: 4px; margin: 1px 0 0; color: #222; }
.stack { display: flex; flex-direction: column; }
.item { display: flex; align-items: center; gap: 2px; height: 12px; white-space: nowrap; }
.item .arrow { margin-left: 1px; color: #222; }
.row { display: flex; gap: 2px; height: 17px; }
.set { display: flex; align-items: center; height: 14px; border: 1px solid #c2cfe2; border-radius: 2px; background: #edf3fa; color: #8695ac; }
.set button { display: flex; align-items: center; justify-content: center; gap: 2px; flex: 1; padding: 0 1px; }
.serif { width: 43px; font: 8px/8px "Liberation Serif", serif; color: #71819a; }
.main-ribbon { overflow: hidden; }
.g-insert { width: 122px; padding-left: 3px; }
.g-insert .tools { grid-template-columns: 24px 24px 24px 23px 22px; padding-top: 1px; }
.g-font, .g-para, .g-line { padding-top: 3px; }
.g-font { width: 147px; padding-left: 4px; }
.g-font select { height: 13px; appearance: none; border: 1px solid #bdcbdd; background: linear-gradient(45deg, transparent 50%, #8593a8 50%) right 4px center / 2px 2px no-repeat, linear-gradient(-45deg, transparent 50%, #8593a8 50%) right 2px center / 2px 2px no-repeat, #eef2f7; }
.g-font .wide { width: 66px; }
.g-font .small { width: 23px; }
.g-font .fmt { flex: none; width: 96px; }
.g-para { width: 58px; }
.g-para .set { flex: 1; }
.g-line { width: 38px; padding-left: 3px; padding-right: 2px; }
.g-line .set { flex: 1; }
.g-edit { width: 48px; padding-left: 4px; }
.g-opac { width: 86px; padding-left: 5px; }
.g-arrange { display: grid; grid-template-columns: 41px 37px 86px; width: 164px; padding-top: 1px; }
.g-arrange .stack { margin-top: -1px; }
.g-transform { width: 62px; padding-left: 5px; }

.work { display: flex; flex: 1; min-height: 0; }
.side { display: flex; flex-direction: column; flex: none; width: 156px; border-right: 1px solid #b9bfca; background: #fff; }
.panes { display: flex; align-items: center; gap: 1px; flex: none; height: 20px; padding: 2px 3px 0; background: linear-gradient(#fff, #e8eef6); border-bottom: 1px solid #d2dae5; }
.panes button { display: flex; align-items: center; justify-content: center; width: 14px; height: 15px; }
.panes svg { width: 11px; height: 11px; }
.panes .on { background: #b9dcf8; }
.side-title { flex: none; height: 13px; padding: 3px 1px 0; background: linear-gradient(#fff, #c4daf4); color: #1b212c; }
.mini { display: flex; align-items: center; gap: 3px; flex: none; height: 13px; padding-left: 2px; background: #f0f4fa; border-bottom: 1px solid #7681c2; }
.mini .ic { width: 9px; height: 9px; }
.tree { flex: none; padding-bottom: 7px; list-style: none; color: #111; border-bottom: 2px solid #dcdcdc; }
.tree li { display: flex; align-items: center; gap: 1px; height: 10px; white-space: nowrap; border-bottom: 1px solid #f4f4f4; }
.tree .ic { width: 9px; }
.tree .l1 { padding-left: 18px; }
.tree .l2 { padding-left: 27px; }
.tree .l3 { padding-left: 35px; background: linear-gradient(90deg, transparent 28%, #eee 28%); }
.props { display: flex; flex-direction: column; flex: 1; min-height: 0; border-bottom: 2px solid #bdbdc1; color: #111; font-family: Lato, sans-serif; }
.props table { width: 100%; border-collapse: collapse; table-layout: fixed; }
.props th, .props td { height: 9px; padding: 0 0 0 2px; line-height: 8px; text-align: left; font-weight: normal; white-space: nowrap; overflow: hidden; border-bottom: 1px solid #b9b9bc; }
.props th { height: 11px; border-bottom: 0; border-right: 1px solid #e2e2e2; }
.props th:first-child { width: 54px; }
.props td:first-child { border-right: 1px solid #a9a9ac; }
.props .lock td { border-right: 0; }
.lock label { display: flex; align-items: center; gap: 3px; }
.lock input { width: 7px; height: 7px; appearance: none; border: 1px solid #555; background: #fff; }
.props .off { color: #8b8b8b; }
.rest { flex: 1; width: 54px; border-right: 1px solid #b0b0b3; }
.confirm { display: flex; align-items: center; justify-content: flex-end; gap: 3px; flex: none; height: 18px; padding-right: 2px; background: linear-gradient(#fff, #d9e6f6); font-family: Lato, sans-serif; }
.confirm button { display: flex; align-items: center; justify-content: center; gap: 3px; height: 13px; padding: 0 3px; background: #cbcbcb; border: 1px solid #bebebe; color: #858585; }

.doc { position: relative; display: flex; flex-direction: column; flex: 1; min-width: 0; padding-left: 2px; }
.notice { display: flex; gap: 3px; flex: none; height: 22px; padding: 2px 4px 3px 0; background: #fff; }
.notice-box { display: flex; align-items: center; justify-content: flex-end; flex: 1; padding-right: 4px; background: linear-gradient(#fff, #e9eef6); border: 1px solid #777; }
.notice button { align-self: flex-start; margin-top: 2px; }
.notice svg { width: 5px; height: 5px; color: #111; }
.canvas { position: relative; display: grid; grid-template-columns: 104px 1fr 104px 9px; flex: 1; min-height: 0; overflow: hidden; background: #9a99b3; }
.page { grid-column: 2; display: flex; flex-direction: column; justify-content: flex-end; padding: 0 20px 0 49px; background: #fff; border: 1px solid #62617b; border-width: 0 1px; font: 8px/13px Roboto, sans-serif; color: #33363c; height: 338px; }
.page p { margin-bottom: 6px; }
.page .last { margin-bottom: 0; }
.line { display: block; text-align: justify; text-align-last: justify; white-space: nowrap; }
.page a { color: #3a35e8; }
.scroll { grid-column: 4; display: flex; align-items: flex-end; justify-content: center; height: 330px; padding-bottom: 2px; background: #f3f3f3; color: #555; }
.scroll svg { width: 5px; height: 5px; }
.watermark { position: absolute; right: 12px; bottom: -3px; color: #fff; font: 35px/40px "Liberation Sans", sans-serif; -webkit-text-stroke: 1px #fff; text-shadow: 0 0 3px #8d8ec6, 1px 2px 2px #777aa8, 0 0 6px #a8a8de; }

.status { position: relative; display: flex; align-items: center; flex: none; height: 14px; padding-left: 1px; background: #f1f1f1; border-bottom: 1px solid #a9a9a9; white-space: nowrap; color: #111; }
.tick { width: 1px; height: 4px; background: #999; margin: 0 6px 0 9px; }
.status > a { width: 75px; }
.pageno { width: 42px; }
.pager, .history { display: flex; align-items: center; height: 11px; background: #dce7f6; border: 1px solid #cfdaea; }
.pager { margin-left: 16px; }
.pager button { width: 11px; padding-left: 1px; }
.pager input { width: 20px; height: 9px; background: #fff; text-align: center; }
.history { margin-left: 2px; }
.history button { width: 10px; }
.history + .tick { margin: 0 5px 0 2px; }
.views { display: flex; align-items: center; margin-left: auto; height: 11px; background: #dde7f4; }
.views button { display: flex; align-items: center; justify-content: center; gap: 2px; min-width: 12px; height: 11px; padding: 0 1px; }
.views .on { background: #ffca70; border: 1px solid #d99b3c; }
.views + .zoom { margin-left: 7px; }
.zoom { display: flex; align-items: center; gap: 3px; padding-right: 2px; }
.zoom span { width: 20px; }
.zoom button svg { width: 9px; height: 9px; }
.zoom input { width: 46px; height: 10px; appearance: none; background: linear-gradient(#cfd2d6, #cfd2d6) center / 100% 1px no-repeat; }
.zoom input::-webkit-slider-thumb { appearance: none; width: 6px; height: 9px; background: #0b78d0; clip-path: polygon(0 0, 100% 0, 100% 70%, 50% 100%, 0 70%); }
.grip { width: 6px; height: 6px; align-self: flex-end; }

.dialog { position: absolute; inset: 54px 101px 56px 100px; display: flex; flex-direction: column; background: #fff; border: 1px solid #a8b2bd; box-shadow: 0 2px 8px rgba(0, 0, 0, .45); }
.dialog .titlebar { height: 14px; padding-left: 2px; }
.dialog .tabs { height: 12px; }
.dialog .tabs .active { padding: 0 7px; margin-left: 1px; }
.dialog .ribbon { height: 50px; }
.d-clip { width: 59px; padding-left: 5px; }
.d-undo { width: 63px; padding-left: 5px; }
.d-tools { width: 149px; }
.d-fx { width: 167px; }
.d-image { width: 126px; }
.d-tools .tools { grid-template-columns: 37px 37px 1px 26px 22px 24px; }
.d-fx .tools { grid-template-columns: 34px 18px 48px 32px 34px; justify-items: center; }
.d-image .tools { grid-template-columns: 46px 1px 41px 36px; }
.vline { height: 29px; background: #a7b0be; }
.strong { color: #515b6b; }
.stage { display: flex; align-items: center; justify-content: center; flex: 1; background: #68aa89; border-top: 1px solid #548f72; }
.toolbar-image { display: flex; align-items: center; gap: 7px; width: 91px; height: 29px; padding: 3px 1px 3px 5px; background: linear-gradient(#dee4f6, #cbd3ed); border: 1px solid #34413b; }
.toolbar-image > svg { width: 14px; height: 14px; }
.dots { width: 2px; height: 16px; background: repeating-linear-gradient(#9aa2b8 0 2px, transparent 2px 4px); }
.drop { display: flex; align-items: flex-end; justify-content: center; width: 9px; height: 22px; margin-left: auto; padding-bottom: 3px; background: linear-gradient(#d8dbe5, #b6b9c1); color: #000; }
.drop .arrow { width: 6px; height: 6px; }
.dstatus { display: flex; align-items: center; flex: none; height: 14px; padding-left: 5px; background: #f1f1f1; color: #111; }
.cell { display: flex; align-items: center; gap: 3px; }
.c1 { width: 63px; }
.c2, .c3, .c4 { gap: 6px; }
.c2::before, .c3::before, .c4::before { content: ""; width: 1px; height: 4px; background: #999; }
.c2 { width: 118px; }
.c3 { width: 66px; }
.dstatus .zoom { margin-left: auto; }
```
